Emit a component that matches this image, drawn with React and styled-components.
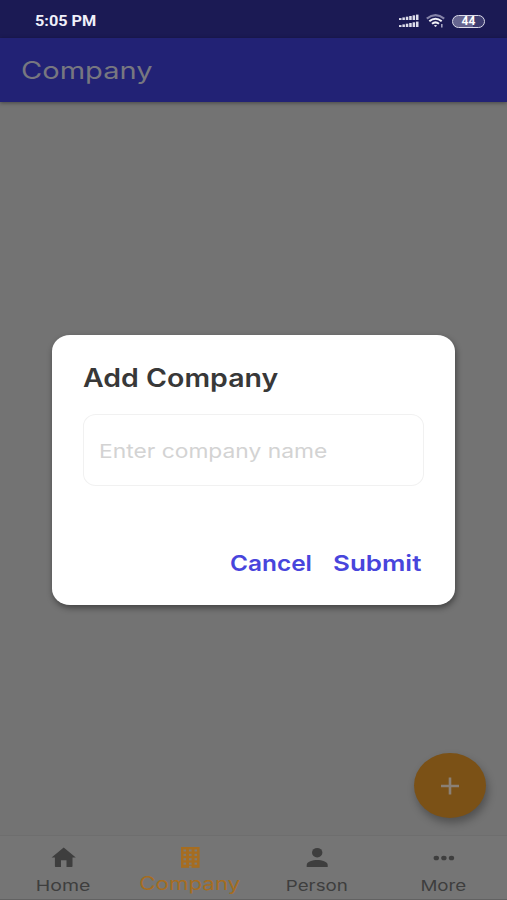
import React from "react";
import styled, { createGlobalStyle } from "styled-components";

const GlobalStyle = createGlobalStyle`
  * {
    box-sizing: border-box;
  }
  body {
    margin: 0;
    font-family: Inter, "Open Sans", sans-serif;
  }
`;

const Screen = styled.div`
  position: relative;
  width: 507px;
  height: 900px;
  display: flex;
  flex-direction: column;
  overflow: hidden;
  background: #737373;
`;

const StatusBar = styled.header`
  height: 38px;
  flex-shrink: 0;
  display: flex;
  align-items: center;
  justify-content: space-between;
  padding: 4px 22px 0 35px;
  color: #f0f0fa;
  background: #1b1a54;
`;

const StatusIcons = styled.div`
  display: flex;
  align-items: center;
  gap: 7px;
`;

const Battery = styled.div`
  width: 33px;
  height: 13px;
  display: flex;
  align-items: center;
  justify-content: center;
  border: 1.5px solid #dcdcea;
  border-radius: 7px;
  background: linear-gradient(90deg, #66658f 65%, #3d3c70 65%);
  font: bold 12px Roboto, sans-serif;
  color: #fff;
`;

const AppBar = styled.div`
  height: 64px;
  flex-shrink: 0;
  display: flex;
  align-items: center;
  padding: 2px 0 0 21px;
  color: #777780;
  background: #222275;
  box-shadow: 0 1px 4px rgba(0, 0, 0, 0.4);
`;

const Text = styled.span`
  display: inline-block;
  white-space: nowrap;
  font-size: ${(p) => p.$size}px;
  font-weight: ${(p) => p.$weight || 400};
  line-height: 1.2;
  transform: scaleX(${(p) => p.$stretch || 1});
  transform-origin: ${(p) => p.$origin || "left"} center;
`;

const Content = styled.main`
  flex: 1;
  display: flex;
  align-items: flex-end;
  justify-content: flex-end;
  padding: 0 21px 17px 0;
`;

const Fab = styled.button`
  width: 72px;
  height: 65px;
  display: flex;
  align-items: center;
  justify-content: center;
  padding: 0;
  border: 0;
  border-radius: 50%;
  background: #7b5116;
  box-shadow: 2px 5px 8px rgba(0, 0, 0, 0.3);
`;

const BottomNav = styled.nav`
  height: 65px;
  flex-shrink: 0;
  display: grid;
  grid-template-columns: repeat(4, 1fr);
  border-top: 1px solid #6e6e6e;
  border-bottom: 1px solid #626262;
  background: #757575;
`;

const NavItem = styled.a`
  display: flex;
  flex-direction: column;
  align-items: center;
  padding-top: 9px;
  color: ${(p) => (p.$active ? "#a66d20" : "#3e3e3e")};

  svg {
    flex-shrink: 0;
    margin-bottom: ${(p) => (p.$active ? 4 : 8)}px;
  }
`;

const Overlay = styled.div`
  position: absolute;
  inset: 0;
  display: flex;
  justify-content: center;
  align-items: flex-start;
  padding-top: 335px;
`;

const Dialog = styled.section`
  width: 403px;
  height: 270px;
  display: flex;
  flex-direction: column;
  padding: 28px 31px 29px;
  border-radius: 18px / 16px;
  background: #fff;
  box-shadow: 1px 3px 6px rgba(0, 0, 0, 0.42);
`;

const DialogTitle = styled.h2`
  height: 51px;
  margin: 0;
  color: #383838;
`;

const Field = styled.div`
  height: 72px;
  display: flex;
  align-items: center;
  padding: 4px 0 0 15px;
  border: 1px solid #f1f1f1;
  border-radius: 13px / 12px;
  color: #d3d3d3;
`;

const Actions = styled.div`
  margin-top: auto;
  display: flex;
  padding-left: 147px;
  color: #4845dc;
`;

const Action = styled.div`
  width: ${(p) => p.$width}px;
`;

const SignalIcon = () => (
  <svg width="20" height="14" viewBox="0 0 20 14" fill="#dedeec">
    {[0, 1, 2, 3, 4, 5].map((i) => (
      <g key={i}>
        <rect x={i * 3.4} y={4.1 - i * 0.7} width="2.5" height={1.9 + i * 0.7} />
        <rect x={i * 3.4} y={11.1 - i * 0.7} width="2.5" height={1.9 + i * 0.7} />
      </g>
    ))}
  </svg>
);

const WifiIcon = () => (
  <svg width="19" height="14" viewBox="0 0 19 14" fill="none" strokeWidth="2.1">
    <path d="M.8 4.6Q9.5-2.2 18.2 4.6" stroke="#8584a8" />
    <path d="M3.3 7.3Q9.5 2.2 15.7 7.3" stroke="#f2f2f8" />
    <path d="M6 9.8Q9.5 7 13 9.8" stroke="#f2f2f8" />
    <path d="M7.8 11.4Q9.5 10.4 11.2 11.4L9.5 13z" fill="#eeeef6" />
    <path d="M15.8 10v3.5" stroke="#a3a2c0" strokeWidth="1.6" />
  </svg>
);

const HomeIcon = () => (
  <svg width="26" height="24" viewBox="0 0 26 24" fill="currentColor">
    <path d="M13.7 2.5 25.8 12.4H22.5V21.2Q22.5 22 21.7 22H16.5V15.3H11V22H5.7Q4.9 22 4.9 21.2V12.4H1.6z" />
  </svg>
);

const CompanyIcon = () => (
  <svg width="26" height="24" viewBox="0 0 26 24">
    <path d="M4 2h18.6v20.8H4z" fill="currentColor" />
    <g fill="#807a70">
      {[4.4, 8.8, 13.2, 17.6].map((y) =>
        [6.5, 12, 17.5].map((x) => (
          <rect key={`${x}-${y}`} x={x} y={y} width="2.6" height="2.1" />
        ))
      )}
      <rect x="12" y="20.8" width="2.6" height="2" />
    </g>
  </svg>
);

const PersonIcon = () => (
  <svg width="26" height="24" viewBox="0 0 26 24" fill="currentColor">
    <ellipse cx="13.2" cy="7.7" rx="5.2" ry="4.8" />
    <path d="M2.7 22v-2.1c0-3.3 6-5 10.5-5s10.5 1.7 10.5 5v2.1z" />
  </svg>
);

const MoreIcon = () => (
  <svg width="26" height="24" viewBox="0 0 26 24" fill="currentColor">
    <ellipse cx="5.3" cy="13" rx="2.7" ry="2.3" />
    <ellipse cx="12.9" cy="13" rx="2.7" ry="2.3" />
    <ellipse cx="20.5" cy="13" rx="2.7" ry="2.3" />
  </svg>
);

const tabs = [
  { label: "Home", icon: HomeIcon, stretch: 1.3 },
  { label: "Company", icon: CompanyIcon, stretch: 1.24, active: true },
  { label: "Person", icon: PersonIcon, stretch: 1.25 },
  { label: "More", icon: MoreIcon, stretch: 1.25 },
];

const Clock = styled(Text)`
  font-family: Roboto, sans-serif;
`;

const App = () => {
  return (
    <Screen>
      <GlobalStyle />
      <StatusBar>
        <Clock $size={14} $weight={700} $stretch={1.16}>
          5:05 PM
        </Clock>
        <StatusIcons>
          <SignalIcon />
          <WifiIcon />
          <Battery>44</Battery>
        </StatusIcons>
      </StatusBar>
      <AppBar>
        <Text $size={24} $stretch={1.21}>
          Company
        </Text>
      </AppBar>
      <Content>
        <Fab aria-label="Add">
          <svg width="20" height="18" viewBox="0 0 20 18" stroke="#8a8075" strokeWidth="2.6">
            <path d="M1 9h18M10 .5v17" />
          </svg>
        </Fab>
      </Content>
      <BottomNav>
        {tabs.map(({ label, icon: Icon, active, stretch }) => (
          <NavItem key={label} $active={active}>
            <Icon />
            <Text
              $size={active ? 18 : 15}
              $stretch={stretch}
              $origin="center"
            >
              {label}
            </Text>
          </NavItem>
        ))}
      </BottomNav>
      <Overlay>
        <Dialog>
          <DialogTitle>
            <Text $size={25} $weight={600} $stretch={1.14}>
              Add Company
            </Text>
          </DialogTitle>
          <Field>
            <Text $size={19} $stretch={1.2}>
              Enter company name
            </Text>
          </Field>
          <Actions>
            <Action $width={103}>
              <Text $size={22} $weight={600} $stretch={1.11}>
                Cancel
              </Text>
            </Action>
            <Action $width={88}>
              <Text $size={22} $weight={600} $stretch={1.18}>
                Submit
              </Text>
            </Action>
          </Actions>
        </Dialog>
      </Overlay>
    </Screen>
  );
};

export default App;
